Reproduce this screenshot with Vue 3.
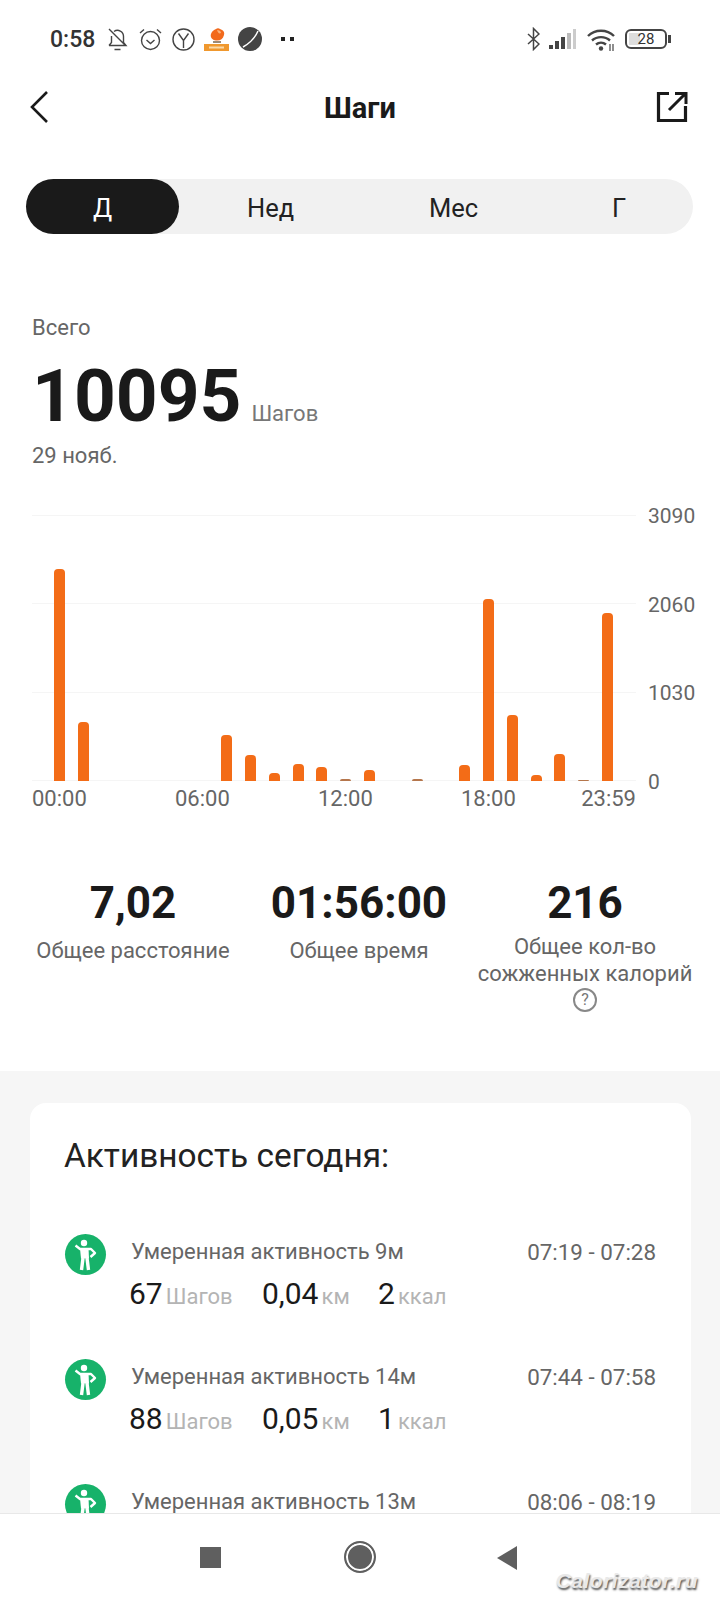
<script setup>
const tabs = ['Д', 'Нед', 'Мес', 'Г'];

const hourly = [212, 59, 0, 0, 0, 0, 0, 46, 26, 8, 17, 14, 2, 11, 0, 2, 0, 16, 182, 66, 6, 27, 1.5, 168];
const yLabels = ['3090', '2060', '1030', '0'];
const xLabels = ['00:00', '06:00', '12:00', '18:00', '23:59'];

const stats = [
  { value: '7,02', label: 'Общее расстояние' },
  { value: '01:56:00', label: 'Общее время' },
  { value: '216', label: 'Общее кол-во сожженных калорий', help: true },
];

const activities = [
  { title: 'Умеренная активность 9м', time: '07:19 - 07:28', steps: '67', km: '0,04', kcal: '2' },
  { title: 'Умеренная активность 14м', time: '07:44 - 07:58', steps: '88', km: '0,05', kcal: '1' },
  { title: 'Умеренная активность 13м', time: '08:06 - 08:19' },
];
</script>

<template>
  <div class="screen">
    <div class="scroll">
      <div class="statusbar">
        <div class="status-left">
          <span class="clock">0:58</span>
          <svg class="bell" width="21" height="23" viewBox="0 0 21 23" fill="none" stroke="#444" stroke-width="1.400">
            <path d="M2 17.500h17l-2.500-3V8.500a6 6 0 0 0-9.500-5M4.500 8v6.500L2 17.500M7.500 21.500h6M2 1l16 16" />
          </svg>
          <svg class="alarm" width="23" height="23" viewBox="0 0 23 23" fill="none" stroke="#444" stroke-width="1.400">
            <circle cx="11.500" cy="12.500" r="9" />
            <path d="M7.500 12l4 3.500 4-3.500M1 5l4-3.500M22 5l-4-3.500" />
          </svg>
          <svg class="ybrowser" width="23" height="23" viewBox="0 0 23 23" fill="none" stroke="#444" stroke-width="1.400">
            <circle cx="11.500" cy="11.500" r="10.500" />
            <path d="M6.500 5.500l5 7 5-7M11.500 12.500v7.500" />
          </svg>
          <svg class="stamp" width="25" height="23" viewBox="0 0 25 23">
            <path d="M12 1c1-1 3-1 4 0 3 1 5 3 4 6-1 4-4 6-8 5.500C8 12 6 9 7 6c1-3 3-4 5-5z" fill="#f26a1c" />
            <path d="M13 2c2 0 4 1 4 3-2 1-3 0-4-3z" fill="#f9b27a" />
            <rect x="9" y="13" width="8" height="2" fill="#9c8a76" />
            <rect x="0" y="16" width="25" height="7" fill="#f0982e" />
            <rect x="5" y="18.500" width="15" height="2" fill="#fbd9a8" />
          </svg>
          <svg class="planet" width="24" height="24" viewBox="0 0 24 24">
            <circle cx="12" cy="12" r="12" fill="#444" />
            <path d="M5 20C12 16 17 11 20 4" fill="none" stroke="#fff" stroke-width="1.500" />
          </svg>
          <span class="dots"><i></i><i></i></span>
        </div>
        <div class="status-right">
          <svg width="13" height="24" viewBox="0 0 13 24" fill="none" stroke="#444" stroke-width="1.500">
            <path d="M1 7l11 10-5.500 5.500V1.500L12 7 1 17" />
          </svg>
          <svg class="signal" width="27" height="20" viewBox="0 0 27 20">
            <rect x="0" y="16" width="4" height="4" fill="#444" />
            <rect x="6" y="12" width="4" height="8" fill="#444" />
            <rect x="12" y="8" width="4" height="12" fill="#444" />
            <rect x="18" y="4" width="4" height="16" fill="#bbb" />
            <rect x="24" y="0" width="3" height="20" fill="#ccc" />
          </svg>
          <svg class="wifi" width="28" height="23" viewBox="0 0 28 23" fill="none" stroke="#444" stroke-width="2.400">
            <path d="M1 8c7-7 19-7 26 0M5 12.500c5-4.500 13-4.500 18 0M9 16.500c3-2.500 7-2.500 10 0" />
            <circle cx="14" cy="20.500" r="2.200" fill="#444" stroke="none" />
            <path d="M23 16v7M26 16v7" stroke-width="1.200" />
          </svg>
          <span class="battery"><span class="battery-fill"></span><span class="battery-num">28</span></span>
          <span class="battery-tip"></span>
        </div>
      </div>

      <div class="header">
        <svg class="back" width="22" height="34" viewBox="0 0 22 34" fill="none" stroke="#1a1a1a" stroke-width="2.600">
          <path d="M19 2L4 17l15 15" />
        </svg>
        <div class="title">Шаги</div>
        <svg class="share" width="32" height="32" viewBox="0 0 32 32" fill="none" stroke="#1a1a1a" stroke-width="3.200">
          <path d="M13 2.500H2.500v27h27V15" />
          <path d="M13 19L29 3M19 2.500h11V13" stroke-width="3" />
        </svg>
      </div>

      <div class="tabs">
        <div v-for="(tab, i) in tabs" :key="tab" class="tab" :class="{ active: i === 0 }">{{ tab }}</div>
      </div>

      <div class="total">
        <div class="total-caption">Всего</div>
        <div class="total-line">
          <span class="total-value">10095</span>
          <span class="total-unit">Шагов</span>
        </div>
        <div class="total-date">29 нояб.</div>
      </div>

      <div class="chart">
        <div class="plot">
          <div v-for="n in 4" :key="n" class="gridline"></div>
          <div class="bars">
            <div v-for="(h, i) in hourly" :key="i" class="slot">
              <div v-if="h" class="bar" :class="{ tiny: h < 3 }" :style="{ height: h + 'px' }"></div>
            </div>
          </div>
        </div>
        <div class="y-axis">
          <span v-for="l in yLabels" :key="l">{{ l }}</span>
        </div>
        <div class="x-axis">
          <span v-for="l in xLabels" :key="l">{{ l }}</span>
        </div>
      </div>

      <div class="stats">
        <div v-for="s in stats" :key="s.value" class="stat">
          <div class="stat-value">{{ s.value }}</div>
          <div class="stat-label" :class="{ long: s.help }">{{ s.label }}</div>
          <div v-if="s.help" class="help">?</div>
        </div>
      </div>

      <div class="lower">
        <div class="card">
          <div class="card-title">Активность сегодня:</div>
          <div v-for="a in activities" :key="a.time" class="row">
            <div class="badge">
              <svg width="41" height="41" viewBox="0 0 41 41" fill="none" stroke="#fff" stroke-linejoin="round">
                <circle cx="19" cy="9" r="3.200" fill="#fff" stroke="none" />
                <path d="M10.500 11.500L15 15h11l4 4-4.500 4" stroke-width="2.400" />
                <path d="M15 14.500h8.500l.5 10h-8z" fill="#fff" stroke="none" />
                <path d="M18 24l-1.500 12M22 24l1.500 12" stroke-width="3.400" />
              </svg>
            </div>
            <div class="row-body">
              <div class="row-top">
                <span>{{ a.title }}</span>
                <span class="row-time">{{ a.time }}</span>
              </div>
              <div v-if="a.steps" class="row-values">
                <div><b>{{ a.steps }}</b><em>Шагов</em></div>
                <div><b>{{ a.km }}</b><em>км</em></div>
                <div><b>{{ a.kcal }}</b><em>ккал</em></div>
              </div>
            </div>
          </div>
        </div>
      </div>
    </div>

    <div class="navbar">
      <span class="nav-square"></span>
      <span class="nav-circle"></span>
      <span class="nav-back"></span>
      <span class="watermark">Calorizator.ru</span>
    </div>
  </div>
</template>

<style>
html, body {
  margin: 0;
  background: #fff;
}
</style>

<style scoped>
.screen {
  width: 720px;
  height: 1600px;
  display: flex;
  flex-direction: column;
  overflow: hidden;
  position: relative;
  background: #fff;
  font-family: Roboto, "Liberation Sans", sans-serif;
  color: #1a1a1a;
}

.scroll {
  flex: 1;
  min-height: 0;
  overflow: hidden;
}

.statusbar {
  height: 78px;
  box-sizing: border-box;
  padding: 0 49px 0 50px;
  display: flex;
  align-items: center;
  justify-content: space-between;
}

.status-left,
.status-right {
  display: flex;
  align-items: center;
}

.clock {
  font-size: 23px;
  font-weight: 500;
  color: #333;
  margin-right: 12px;
}

.alarm {
  margin-left: 11px;
}

.ybrowser {
  margin-left: 10px;
}

.stamp {
  margin-left: 9px;
}

.planet {
  margin-left: 9px;
}

.dots {
  display: flex;
  gap: 5px;
  margin-left: 19px;
}

.dots i {
  width: 4px;
  height: 4px;
  background: #222;
}

.signal {
  margin-left: 9px;
}

.wifi {
  margin-left: 11px;
}

.battery {
  position: relative;
  margin-left: 10px;
  width: 42px;
  height: 20px;
  box-sizing: border-box;
  border: 2.500px solid #444;
  border-radius: 6px;
  display: flex;
  align-items: center;
  justify-content: center;
}

.battery-fill {
  position: absolute;
  left: 2px;
  top: 2px;
  bottom: 2px;
  width: 11px;
  background: #ddd;
}

.battery-num {
  position: relative;
  font-size: 15px;
  color: #333;
}

.battery-tip {
  width: 3px;
  height: 8px;
  margin-left: 1px;
  background: #444;
}

.header {
  height: 58px;
  padding: 0 32px 0 28px;
  display: flex;
  align-items: center;
  justify-content: space-between;
}

.title {
  font-size: 29px;
  font-weight: 700;
  margin-left: 14px;
  padding-top: 2px;
}

.tabs {
  margin: 43px 27px 0 26px;
  height: 55px;
  border-radius: 28px;
  background: #f1f1f1;
  display: grid;
  grid-template-columns: 153px 183px 183px 1fr;
}

.tab {
  display: flex;
  align-items: center;
  justify-content: center;
  font-size: 25.500px;
  padding-top: 2px;
  box-sizing: border-box;
  border-radius: 28px;
  color: #222;
}

.tab.active {
  background: #1a1a1a;
  color: #fff;
}

.total {
  margin-top: 81px;
  padding-left: 32px;
}

.total-caption {
  font-size: 22px;
  line-height: 26px;
  color: #666;
}

.total-line {
  margin-top: 20px;
  height: 70px;
  display: flex;
  align-items: flex-end;
}

.total-value {
  font-size: 73px;
  font-weight: 700;
  line-height: 70px;
}

.total-unit {
  font-size: 22px;
  color: #777;
  margin-left: 10px;
  line-height: 34px;
}

.total-date {
  margin-top: 12px;
  font-size: 22px;
  line-height: 26px;
  color: #666;
}

.chart {
  margin-top: 46px;
  padding-left: 32px;
  display: grid;
  grid-template-columns: 604px 1fr;
  grid-template-rows: 266px auto;
}

.plot {
  position: relative;
  display: flex;
  flex-direction: column;
  justify-content: space-between;
}

.gridline {
  height: 1px;
  background: #f5f5f5;
}

.bars {
  position: absolute;
  left: 16px;
  right: 16.500px;
  bottom: 0;
  top: 0;
  display: grid;
  grid-template-columns: repeat(24, 1fr);
  align-items: end;
}

.slot {
  display: flex;
  justify-content: center;
}

.bar {
  width: 11px;
  background: #f36c17;
  border-radius: 4px 4px 0 0;
}

.bar.tiny {
  background: #b5764c;
}

.y-axis {
  margin: -11px 0 -13px 12px;
  display: flex;
  flex-direction: column;
  justify-content: space-between;
  font-size: 21px;
  line-height: 24px;
  color: #666;
}

.x-axis {
  grid-column: 1;
  margin-top: 5px;
  display: grid;
  grid-template-columns: repeat(4, 143px) 32px;
  font-size: 22px;
  line-height: 26px;
  color: #666;
}

.x-axis span:last-child {
  justify-self: end;
  white-space: nowrap;
}

.stats {
  margin-top: 66px;
  padding: 0 20px;
  display: grid;
  grid-template-columns: repeat(3, 226px);
  height: 193px;
  box-sizing: border-box;
}

.stat {
  text-align: center;
}

.stat-value {
  font-size: 44px;
  font-weight: 700;
  line-height: 50px;
}

.stat-label {
  margin-top: 9px;
  font-size: 22px;
  line-height: 27px;
  color: #666;
}

.stat-label.long {
  margin-top: 5px;
}

.help {
  margin: 1px auto 0;
  width: 20px;
  height: 20px;
  border: 2px solid #888;
  border-radius: 50%;
  font-size: 16px;
  line-height: 20px;
  color: #777;
}

.lower {
  background: #f6f6f6;
  padding: 32px 29px 0 30px;
}

.card {
  background: #fff;
  border-radius: 16px;
  padding: 33px 35px 0 35px;
}

.card-title {
  font-size: 33.400px;
  line-height: 40px;
  margin-left: -1px;
  margin-bottom: 58px;
  color: #222;
}

.row {
  display: flex;
  height: 125px;
  gap: 25px;
  box-sizing: border-box;
}

.badge {
  width: 41px;
  height: 41px;
  border-radius: 50%;
  background: #17b26a;
  flex: none;
}

.row-body {
  flex: 1;
  min-width: 0;
}

.row-top {
  display: flex;
  justify-content: space-between;
  font-size: 22px;
  line-height: 36px;
  color: #666;
}

.row-time {
  font-size: 22.400px;
}

.row-values {
  margin-top: 6px;
  margin-left: -2px;
  display: grid;
  grid-template-columns: 133px 116px 1fr;
}

.row-values b {
  font-size: 30px;
  font-weight: 400;
  color: #1a1a1a;
}

.row-values em {
  font-style: normal;
  font-size: 22px;
  color: #b4b4b4;
  margin-left: 3px;
}

.navbar {
  position: relative;
  height: 87px;
  flex: none;
  box-sizing: border-box;
  border-top: 1px solid #e8e8e8;
  background: #fff;
}

.nav-square {
  position: absolute;
  left: 200px;
  top: 33px;
  width: 21px;
  height: 21px;
  background: #5f5f5f;
}

.nav-circle {
  position: absolute;
  left: 344px;
  top: 27px;
  width: 32px;
  height: 32px;
  box-sizing: border-box;
  border-radius: 50%;
  border: 2px solid #5f5f5f;
  background: #5f5f5f;
  box-shadow: inset 0 0 0 2px #fff;
}

.nav-back {
  position: absolute;
  left: 497px;
  top: 32px;
  width: 0;
  height: 0;
  border-top: 12px solid transparent;
  border-bottom: 12px solid transparent;
  border-right: 20px solid #5f5f5f;
}

.watermark {
  position: absolute;
  right: 22px;
  top: 55px;
  font-family: "Liberation Sans", sans-serif;
  font-size: 21px;
  font-weight: 700;
  font-style: italic;
  letter-spacing: 0.500px;
  color: #e9e9e9;
  text-shadow: 1px 2px 2px #555;
}
</style>
